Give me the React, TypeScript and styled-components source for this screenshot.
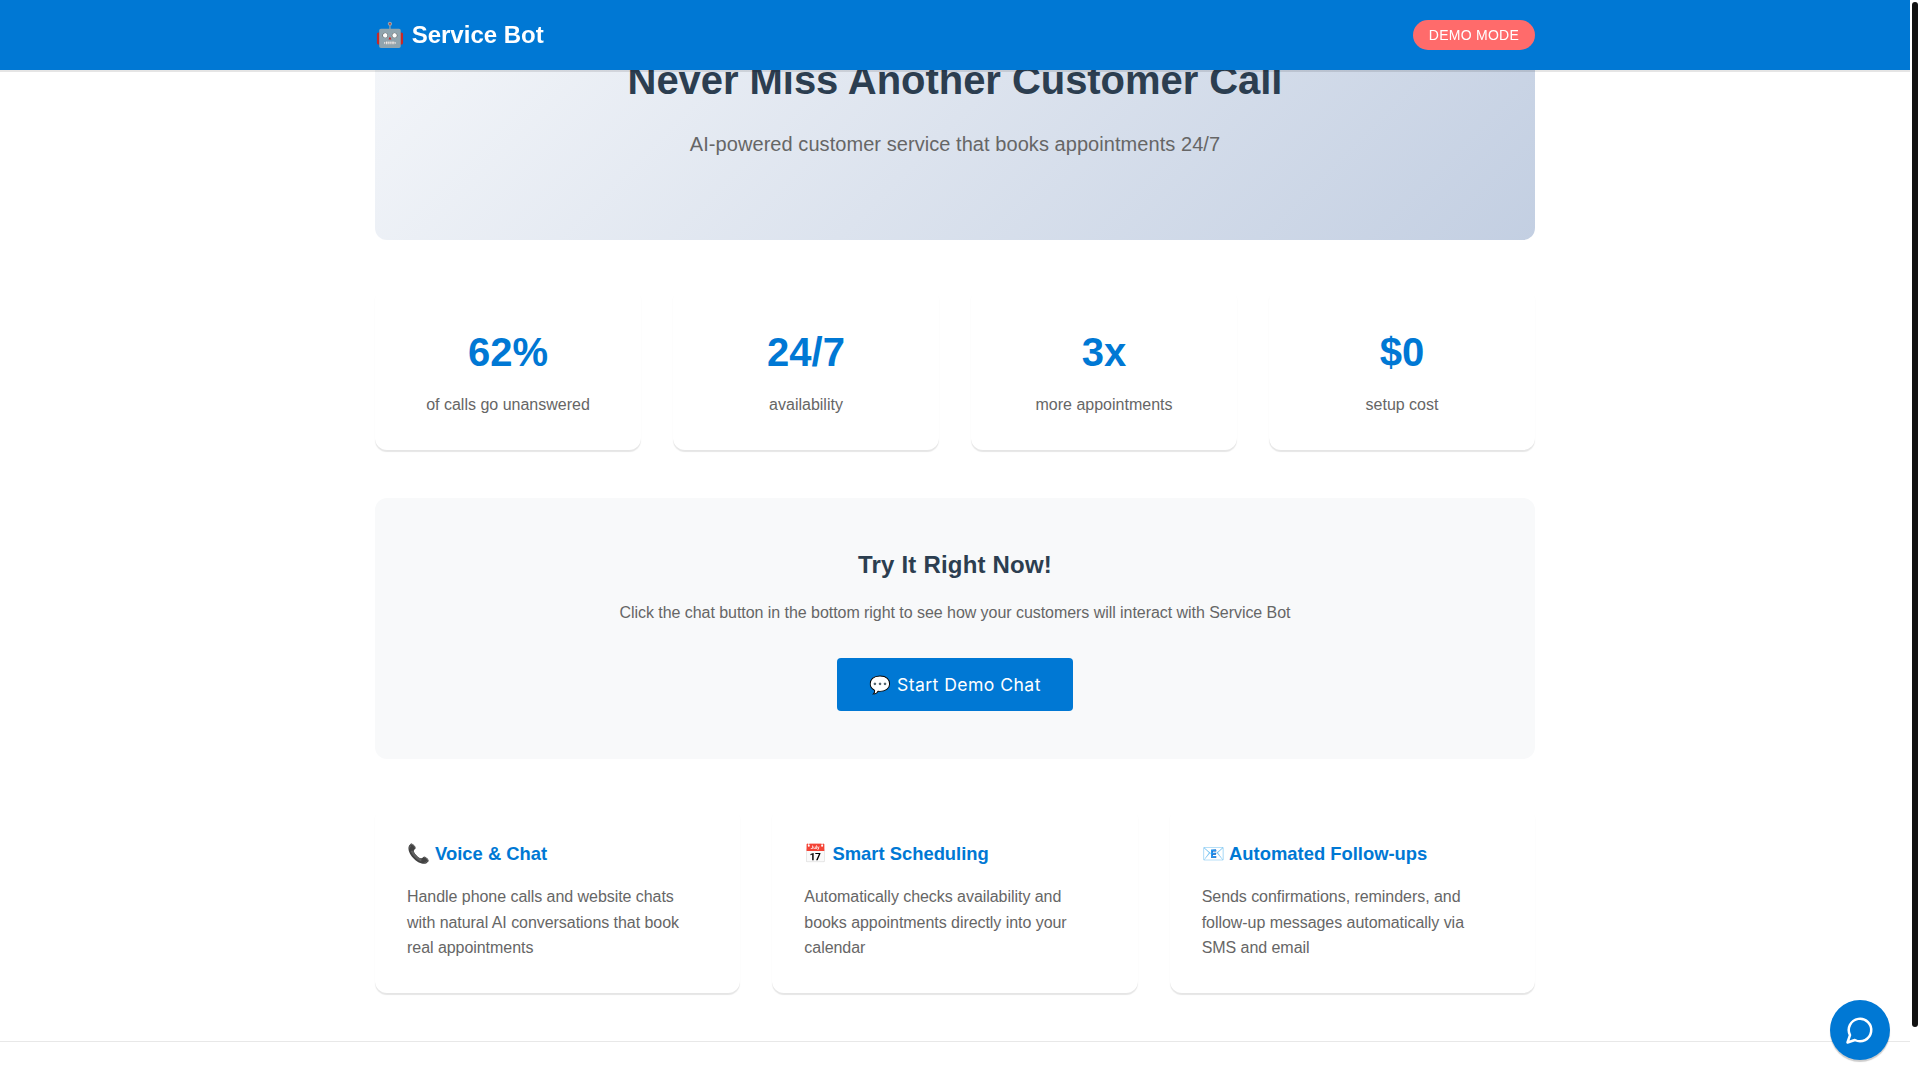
import React from "react";
import styled, { createGlobalStyle } from "styled-components";

const GlobalStyle = createGlobalStyle`
  * {
    box-sizing: border-box;
  }
  body {
    margin: 0;
    background: #ffffff;
    color: #333333;
    font-family: Arial, "Liberation Sans", sans-serif;
    line-height: 1.6;
  }
`;

const Page = styled.div`
  width: calc(100vw - 10px);
  height: 100vh;
  overflow: hidden;
`;

const ScrollThumb = styled.div`
  position: fixed;
  top: 2px;
  right: 2px;
  z-index: 30;
  width: 6px;
  height: 1025px;
  border-radius: 3px;
  background: #111111;
`;

const Nav = styled.nav`
  position: fixed;
  top: 0;
  left: 0;
  right: 10px;
  z-index: 10;
  height: 70px;
  background: #0078d4;
  box-shadow: 0 2px 0 rgba(0, 0, 0, 0.1);
`;

const NavInner = styled.div`
  max-width: 1200px;
  height: 100%;
  margin: 0 auto;
  padding: 0 20px;
  display: flex;
  align-items: center;
  justify-content: space-between;
`;

const Logo = styled.div`
  color: #ffffff;
  font-size: 24px;
  font-weight: 700;
`;

const DemoBadge = styled.span`
  padding: 5px 16px;
  border-radius: 20px;
  background: #ff6b6b;
  color: #ffffff;
  font-size: 14px;
  line-height: 20px;
  letter-spacing: 0.25px;
`;

const Main = styled.main`
  max-width: 1200px;
  margin: 0 auto;
  padding: 0 20px;
`;

const Hero = styled.section`
  padding: 48px 32px 80px;
  border-radius: 12px;
  background: linear-gradient(135deg, #f5f7fa 0%, #c3cfe2 100%);
  text-align: center;
`;

const HeroTitle = styled.h1`
  margin: 0 0 16px;
  color: #2c3e50;
  font-size: 40px;
  line-height: 1.6;
  font-weight: 700;
  letter-spacing: -0.05px;
`;

const HeroText = styled.p`
  margin: 0;
  color: #666666;
  font-size: 20px;
  letter-spacing: 0.06px;
`;

const StatsGrid = styled.section`
  display: grid;
  grid-template-columns: repeat(4, 1fr);
  gap: 32px;
  margin: 48px 0;
`;

const Card = styled.div`
  padding: 32px;
  border-radius: 12px;
  background: #ffffff;
  box-shadow: 0 2px 1px rgba(0, 0, 0, 0.1);
`;

const StatCard = styled(Card)`
  text-align: center;
`;

const StatValue = styled.div`
  margin-bottom: 8px;
  color: #0078d4;
  font-size: 40px;
  font-weight: 700;
`;

const StatLabel = styled.div`
  color: #666666;
  font-size: 16px;
`;

const TryPanel = styled.section`
  padding: 48px;
  border-radius: 12px;
  background: #f8f9fa;
  text-align: center;
`;

const TryTitle = styled.h2`
  margin: 0 0 16px;
  color: #2c3e50;
  font-size: 24px;
  font-weight: 700;
  letter-spacing: 0.2px;
`;

const TryText = styled.p`
  margin: 0 0 32px;
  color: #666666;
  font-size: 16px;
  letter-spacing: -0.05px;
`;

const DemoButton = styled.button`
  padding: 16px 32px;
  border: 0;
  border-radius: 4px;
  background: #0078d4;
  color: #ffffff;
  font-family: Inter, sans-serif;
  font-size: 17.6px;
  letter-spacing: 0.44px;
  cursor: pointer;
`;

const FeatureGrid = styled.section`
  display: grid;
  grid-template-columns: repeat(3, 1fr);
  gap: 32px;
  margin: 48px 0;
`;

const FeatureTitle = styled.h3`
  margin: 0 0 16px;
  color: #0078d4;
  font-size: 18.4px;
  font-weight: 700;
`;

const FeatureText = styled.p`
  margin: 0;
  padding-right: 8px;
  color: #666666;
  font-size: 16px;
  letter-spacing: -0.05px;
`;

const Footer = styled.footer`
  height: 40px;
  border-top: 1px solid #e8e8e8;
`;

const ChatButton = styled.button`
  position: fixed;
  right: 30px;
  bottom: 20px;
  z-index: 20;
  width: 60px;
  height: 60px;
  padding: 0;
  border: 0;
  border-radius: 50%;
  background: #0078d4;
  color: #ffffff;
  display: flex;
  align-items: center;
  justify-content: center;
  box-shadow: 0 2px 1px rgba(0, 0, 0, 0.2);
  cursor: pointer;
`;

const stats = [
  { value: "62%", label: "of calls go unanswered" },
  { value: "24/7", label: "availability" },
  { value: "3x", label: "more appointments" },
  { value: "$0", label: "setup cost" },
];

const features = [
  {
    title: "📞 Voice & Chat",
    text: "Handle phone calls and website chats with natural AI conversations that book real appointments",
  },
  {
    title: "📅 Smart Scheduling",
    text: "Automatically checks availability and books appointments directly into your calendar",
  },
  {
    title: "📧 Automated Follow-ups",
    text: "Sends confirmations, reminders, and follow-up messages automatically via SMS and email",
  },
];

const ChatIcon = () => (
  <svg width="30" height="30" viewBox="0 0 24 24" fill="none" stroke="currentColor" strokeWidth="2" strokeLinecap="round" strokeLinejoin="round">
    <path d="M7.9 20A9 9 0 1 0 4 16.1L2 22Z" />
  </svg>
);

const App = () => {
  return (
    <>
      <GlobalStyle />
      <Page>
        <Nav>
          <NavInner>
            <Logo>🤖 Service Bot</Logo>
            <DemoBadge>DEMO MODE</DemoBadge>
          </NavInner>
        </Nav>
        <Main>
          <Hero>
            <HeroTitle>Never Miss Another Customer Call</HeroTitle>
            <HeroText>AI-powered customer service that books appointments 24/7</HeroText>
          </Hero>
          <StatsGrid>
            {stats.map((s) => (
              <StatCard key={s.label}>
                <StatValue>{s.value}</StatValue>
                <StatLabel>{s.label}</StatLabel>
              </StatCard>
            ))}
          </StatsGrid>
          <TryPanel>
            <TryTitle>Try It Right Now!</TryTitle>
            <TryText>Click the chat button in the bottom right to see how your customers will interact with Service Bot</TryText>
            <DemoButton>💬 Start Demo Chat</DemoButton>
          </TryPanel>
          <FeatureGrid>
            {features.map((f) => (
              <Card key={f.title}>
                <FeatureTitle>{f.title}</FeatureTitle>
                <FeatureText>{f.text}</FeatureText>
              </Card>
            ))}
          </FeatureGrid>
        </Main>
        <Footer />
      </Page>
      <ChatButton aria-label="Open chat">
        <ChatIcon />
      </ChatButton>
      <ScrollThumb />
    </>
  );
};

export default App;
